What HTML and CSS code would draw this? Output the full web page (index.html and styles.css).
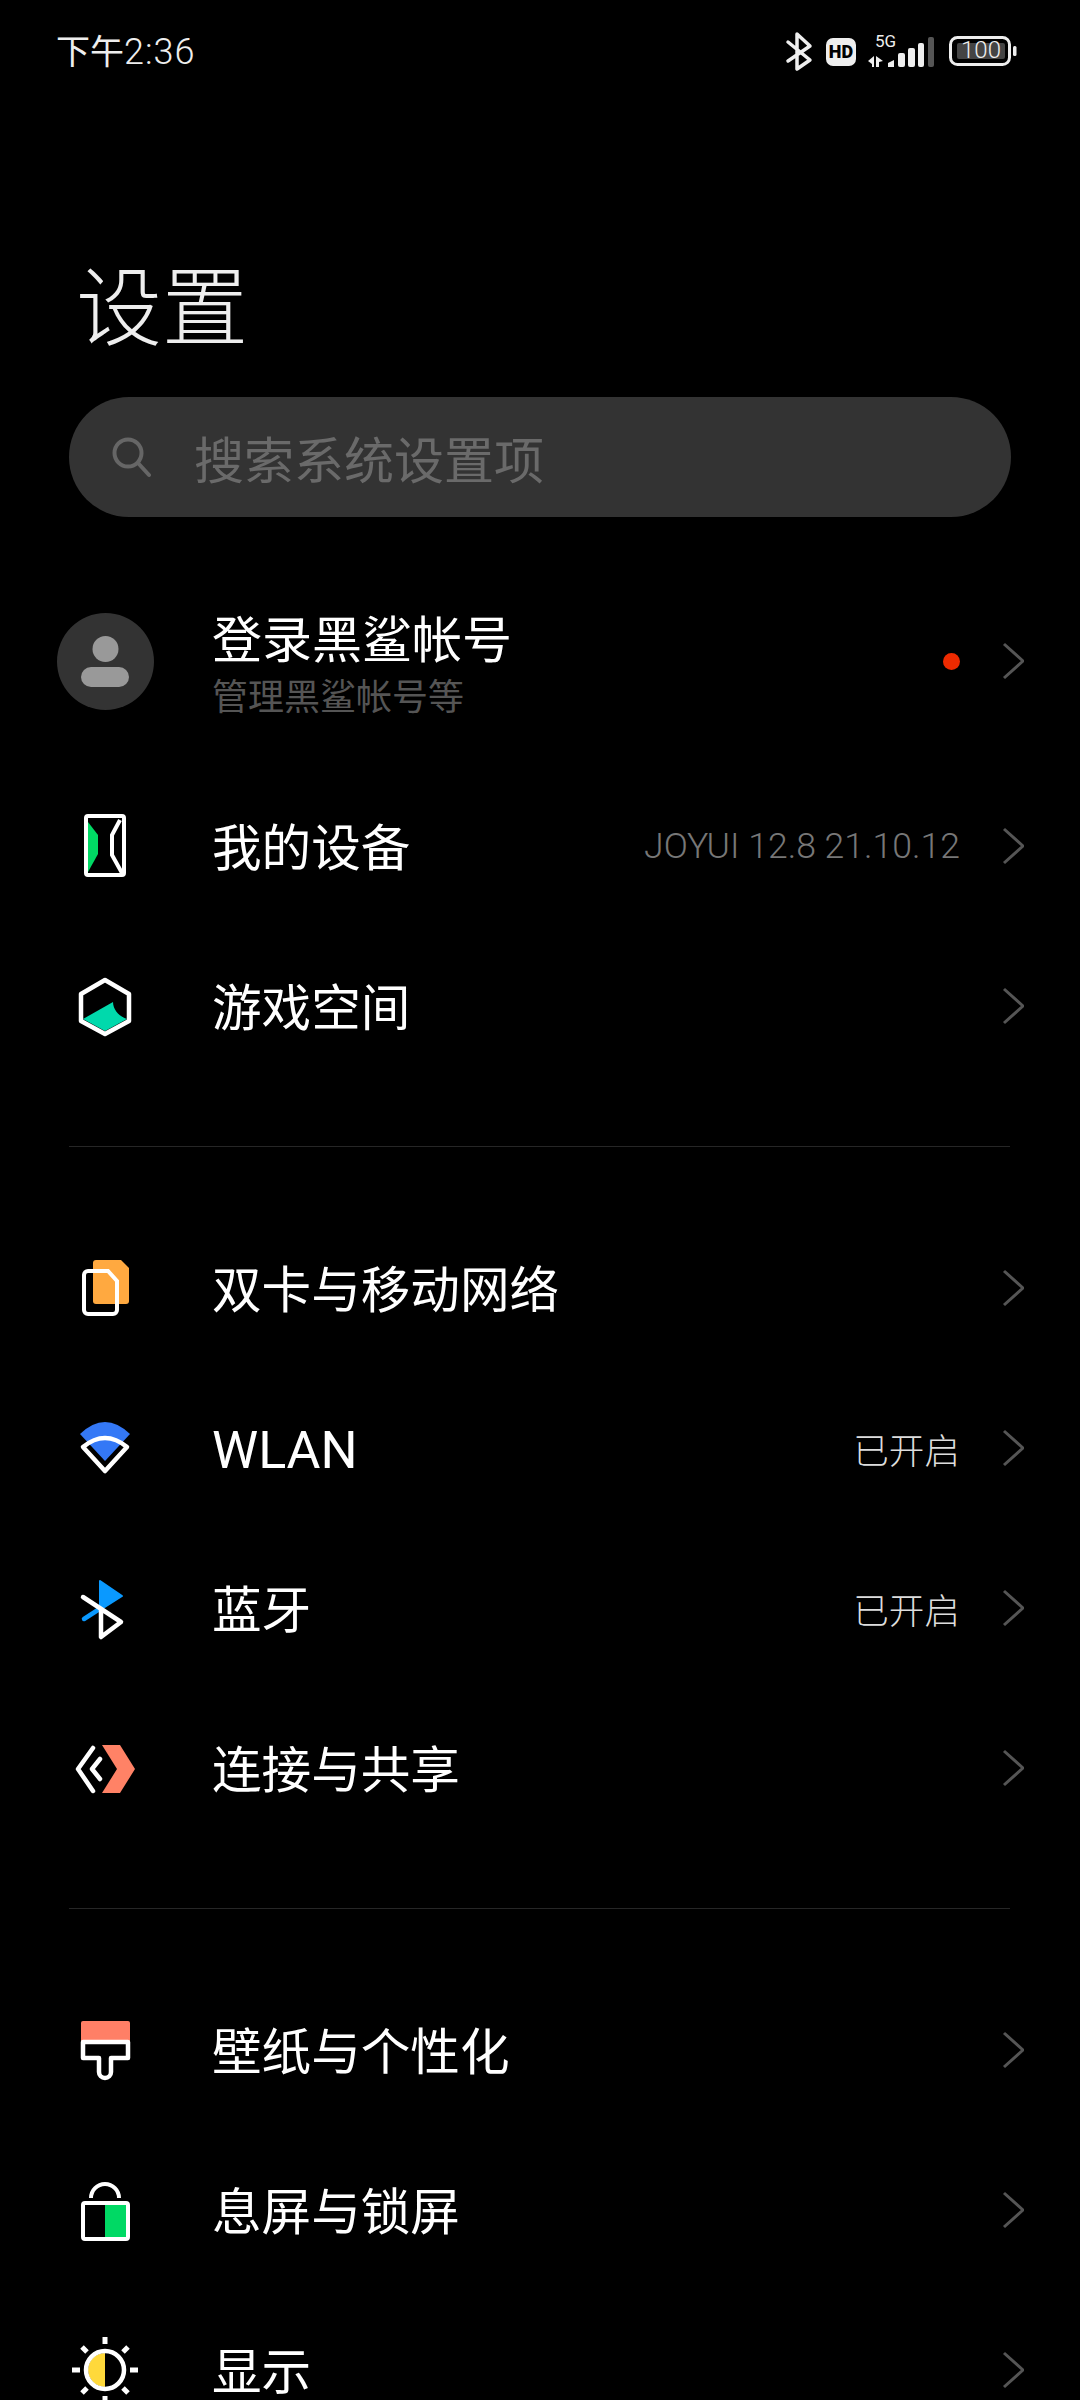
FILE: index.html
```html
<!DOCTYPE html>
<html>
<head>
  <title>设置</title>
  <link rel="stylesheet" href="styles.css">
</head>
<body>
  <div class="page">
    <div class="status-bar">
      <span class="time">下午<span class="time-digits">2:36</span></span>
      <div class="status-icons">
        <svg class="bt-icon" width="30" height="42" viewBox="0 0 30 42"><path d="M4 11L26 29 13 38V3L26 15 4 30" fill="none" stroke="#eee" stroke-width="3.5" stroke-linejoin="round" stroke-linecap="round"/></svg>
        <svg class="hd-icon" width="30" height="28" viewBox="0 0 30 28"><rect width="30" height="28" rx="7" fill="#eee"/><text x="15" y="20" text-anchor="middle" class="hd-text">HD</text></svg>
        <svg class="signal-icon" width="70" height="40" viewBox="0 -6 70 40">
          <text x="9" y="13" class="five-g">5G</text>
          <path d="M2 27L8 22V33H6V30ZM10 22L17 27 13 28V33H10Z" fill="#eee"/>
          <path d="M22 29L28 26V33H22Z" fill="#eee"/>
          <rect x="32" y="19" width="7" height="14" rx="2" fill="#eee"/>
          <rect x="42" y="14" width="7" height="19" rx="2" fill="#eee"/>
          <rect x="52" y="9" width="6" height="24" rx="2" fill="#eee"/>
          <rect x="62" y="3" width="6" height="30" rx="2" fill="#555"/>
        </svg>
        <svg class="battery-icon" width="70" height="30" viewBox="0 0 70 30">
          <rect x="1.5" y="1.5" width="59" height="27" rx="7" fill="none" stroke="#eee" stroke-width="3"/>
          <rect x="8" y="7" width="48" height="16" rx="2" fill="#444"/>
          <rect x="64" y="10" width="3.5" height="10" rx="1.5" fill="#eee"/>
          <text x="32" y="22" text-anchor="middle" class="battery-text">100</text>
        </svg>
      </div>
    </div>

    <h1 class="title">设置</h1>

    <div class="search">
      <svg width="40" height="42" viewBox="0 0 40 42"><circle cx="17" cy="17" r="13.5" fill="none" stroke="#666" stroke-width="4"/><path d="M27 27L38 39" stroke="#666" stroke-width="4" stroke-linecap="round"/></svg>
      <span class="search-text">搜索系统设置项</span>
    </div>

    <div class="section first">
      <div class="row login">
        <div class="row-icon">
          <svg class="avatar" width="97" height="97" viewBox="0 0 97 97"><circle cx="48.5" cy="48.5" r="48.5" fill="#333"/><circle cx="48.5" cy="36" r="13" fill="#999"/><rect x="24" y="54" width="48" height="20" rx="10" fill="#999"/></svg>
        </div>
        <div class="row-text">
          <div class="row-title">登录黑鲨帐号</div>
          <div class="row-sub">管理黑鲨帐号等</div>
        </div>
        <span class="dot"></span>
        <svg class="chevron" width="22" height="38" viewBox="0 0 22 38"><path d="M2 2L21 19 2 36" fill="none" stroke="#555" stroke-width="3"/></svg>
      </div>
      <div class="row">
        <div class="row-icon">
          <svg width="72" height="72" viewBox="0 0 72 72">
            <rect x="17" y="6" width="38" height="59" rx="2" fill="none" stroke="#fff" stroke-width="4"/>
            <path d="M19 12L29 25V44L19 62Z" fill="#00d964"/>
            <path d="M51 10L43 25V45L53 63" fill="none" stroke="#fff" stroke-width="4"/>
          </svg>
        </div>
        <div class="row-title">我的设备</div>
        <span class="value dim">JOYUI 12.8 21.10.12</span>
        <svg class="chevron" width="22" height="38" viewBox="0 0 22 38"><path d="M2 2L21 19 2 36" fill="none" stroke="#555" stroke-width="3"/></svg>
      </div>
      <div class="row">
        <div class="row-icon">
          <svg width="72" height="72" viewBox="0 0 72 72">
            <path d="M14 49L44 32C44 40 50 46 58 49L36 61Z" fill="#00d9ac"/>
            <path d="M36 10L60 24V51L36 64 12 51V24Z" fill="none" stroke="#fff" stroke-width="4.5" stroke-linejoin="round"/>
          </svg>
        </div>
        <div class="row-title">游戏空间</div>
        <svg class="chevron push" width="22" height="38" viewBox="0 0 22 38"><path d="M2 2L21 19 2 36" fill="none" stroke="#555" stroke-width="3"/></svg>
      </div>
    </div>

    <div class="section">
      <div class="row">
        <div class="row-icon">
          <svg width="72" height="72" viewBox="0 0 72 72">
            <path d="M27 8H52L60 16V49A3 3 0 0 1 57 52H27A3 3 0 0 1 24 49V11A3 3 0 0 1 27 8Z" fill="#ffa940"/>
            <path d="M19 19H39L48 29V58A4 4 0 0 1 44 62H19A4 4 0 0 1 15 58V23A4 4 0 0 1 19 19Z" fill="none" stroke="#fff" stroke-width="4"/>
          </svg>
        </div>
        <div class="row-title">双卡与移动网络</div>
        <svg class="chevron push" width="22" height="38" viewBox="0 0 22 38"><path d="M2 2L21 19 2 36" fill="none" stroke="#555" stroke-width="3"/></svg>
      </div>
      <div class="row">
        <div class="row-icon">
          <svg width="72" height="72" viewBox="0 0 72 72">
            <path d="M11 22Q36 -2 61 22L36 49Z" fill="#3478f6"/>
            <path d="M14 35Q36 17 58 35L36 59Z" fill="none" stroke="#fff" stroke-width="4.5" stroke-linejoin="round"/>
          </svg>
        </div>
        <div class="row-title latin">WLAN</div>
        <span class="value">已开启</span>
        <svg class="chevron" width="22" height="38" viewBox="0 0 22 38"><path d="M2 2L21 19 2 36" fill="none" stroke="#555" stroke-width="3"/></svg>
      </div>
      <div class="row">
        <div class="row-icon">
          <svg width="72" height="72" viewBox="0 0 72 72">
            <path d="M31 9L53 24 31 38Z" fill="#0a99ff" stroke="#0a99ff" stroke-width="2" stroke-linejoin="round"/>
            <path d="M32 36L15 47" fill="none" stroke="#0a99ff" stroke-width="4.5" stroke-linecap="round"/>
            <path d="M14 25L52 50 32 65V37" fill="none" stroke="#fff" stroke-width="4.5" stroke-linejoin="round" stroke-linecap="round"/>
          </svg>
        </div>
        <div class="row-title">蓝牙</div>
        <span class="value">已开启</span>
        <svg class="chevron" width="22" height="38" viewBox="0 0 22 38"><path d="M2 2L21 19 2 36" fill="none" stroke="#555" stroke-width="3"/></svg>
      </div>
      <div class="row">
        <div class="row-icon">
          <svg width="72" height="72" viewBox="0 0 72 72">
            <path d="M33 13H51L66 37 51 61H33L48 37Z" fill="#ff8266"/>
            <path d="M24 16L9 37 24 59M31 27L23 37 31 47" fill="none" stroke="#fff" stroke-width="4.5" stroke-linejoin="round" stroke-linecap="round"/>
          </svg>
        </div>
        <div class="row-title">连接与共享</div>
        <svg class="chevron push" width="22" height="38" viewBox="0 0 22 38"><path d="M2 2L21 19 2 36" fill="none" stroke="#555" stroke-width="3"/></svg>
      </div>
    </div>

    <div class="section last">
      <div class="row">
        <div class="row-icon">
          <svg width="72" height="72" viewBox="0 0 72 72">
            <path d="M14 7H59A2 2 0 0 1 61 9V27H12V9A2 2 0 0 1 14 7Z" fill="#ff7f66"/>
            <path d="M14 28V44H30V58A6 6 0 0 0 42 58V44H59V28Z" fill="none" stroke="#fff" stroke-width="4.5" stroke-linejoin="round"/>
          </svg>
        </div>
        <div class="row-title">壁纸与个性化</div>
        <svg class="chevron push" width="22" height="38" viewBox="0 0 22 38"><path d="M2 2L21 19 2 36" fill="none" stroke="#555" stroke-width="3"/></svg>
      </div>
      <div class="row">
        <div class="row-icon">
          <svg width="72" height="72" viewBox="0 0 72 72">
            <rect x="36" y="31" width="21" height="32" fill="#00d964"/>
            <rect x="14" y="29" width="45" height="36" rx="2" fill="none" stroke="#fff" stroke-width="4"/>
            <path d="M22 24A14 14 0 0 1 50 24" fill="none" stroke="#fff" stroke-width="4"/>
          </svg>
        </div>
        <div class="row-title">息屏与锁屏</div>
        <svg class="chevron push" width="22" height="38" viewBox="0 0 22 38"><path d="M2 2L21 19 2 36" fill="none" stroke="#555" stroke-width="3"/></svg>
      </div>
      <div class="row">
        <div class="row-icon">
          <svg width="72" height="72" viewBox="0 0 72 72">
            <path d="M36 19A17 17 0 0 0 36 53Z" fill="#ffd93b"/>
            <circle cx="36" cy="36" r="19" fill="none" stroke="#fff" stroke-width="4.5"/>
            <path d="M36 3V10M36 62V69M3 36H11M61 36H69M13 13L18 18M54 18L59 13M13 59L18 54M54 54L59 59" stroke="#fff" stroke-width="5"/>
          </svg>
        </div>
        <div class="row-title">显示</div>
        <svg class="chevron push" width="22" height="38" viewBox="0 0 22 38"><path d="M2 2L21 19 2 36" fill="none" stroke="#555" stroke-width="3"/></svg>
      </div>
    </div>
  </div>
</body>
</html>
```

FILE: styles.css
```css
body {
  margin: 0;
  background-color: #000;
  color: #fff;
  font-family: Roboto, 'Noto Sans CJK SC', sans-serif;
}

.page {
  height: 2400px;
  overflow: hidden;
}

/* Status bar */
.status-bar {
  height: 104px;
  display: flex;
  align-items: center;
  justify-content: space-between;
  padding: 0 61px 0 56px;
}

.time {
  font-size: 34px;
  line-height: 40px;
  color: #eee;
}

.time-digits {
  font-size: 36px;
  font-weight: 300;
  letter-spacing: 1px;
}

.status-icons {
  display: flex;
  align-items: flex-end;
  height: 42px;
}

.bt-icon {
  margin-right: 12px;
}

.hd-icon {
  margin: 0 10px 7px 0;
}

.hd-text {
  font-size: 18px;
  font-weight: 900;
  fill: #000;
}

.signal-icon {
  margin: 0 13px 5px 0;
}

.five-g {
  font-size: 17px;
  fill: #eee;
}

.battery-icon {
  margin-bottom: 7px;
}

.battery-text {
  font-size: 24px;
  font-weight: 300;
  fill: #eee;
}

/* Header */
.title {
  margin: 0;
  padding-left: 76px;
  font-size: 86px;
  font-weight: 300;
  line-height: 120px;
  margin-top: 146px;
  color: #eee;
}

.search {
  height: 120px;
  margin: 27px 69px 0;
  padding-left: 42px;
  display: flex;
  align-items: center;
  gap: 43px;
  background-color: #333;
  border-radius: 60px;
}

.search-text {
  font-size: 50px;
  color: #6a6a6a;
}

/* Settings list */
.section {
  padding: 61px 0 60px;
  border-bottom: 1px solid #262626;
  margin: 0 70px 0 69px;
}

.section.first {
  padding-top: 39px;
}

.section.last {
  border-bottom: none;
}

.row {
  height: 160px;
  display: flex;
  align-items: center;
  margin-right: -14px;
}

.row.login {
  height: 210px;
}

.row-icon {
  width: 72px;
  height: 72px;
  margin-right: 71px;
  display: flex;
  align-items: center;
  justify-content: center;
  flex: none;
}

.avatar {
  flex: none;
}

.row-text {
  display: flex;
  flex-direction: column;
  padding-top: 10px;
}

.row-title {
  font-size: 49.6px;
  line-height: 50px;
  padding-top: 6px;
}

.login .row-title {
  font-size: 50px;
}

.row-title.latin {
  font-size: 52px;
}

.row-sub {
  margin-top: 7px;
  font-size: 36px;
  line-height: 50px;
  color: #555;
}

.dot {
  width: 17px;
  height: 17px;
  margin-left: auto;
  margin-right: 42px;
  border-radius: 50%;
  background-color: #ee2a00;
}

.value {
  margin-left: auto;
  margin-right: 42px;
  font-size: 35.6px;
  font-weight: 300;
  color: #ddd;
}

.value.dim {
  color: #777;
}

.chevron {
  flex: none;
}

.chevron.push {
  margin-left: auto;
}
```
